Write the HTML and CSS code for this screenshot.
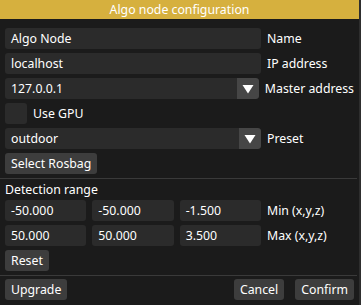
FILE: index.html
```html
<!DOCTYPE html>
<html>
<head>
<meta charset="utf-8">
<link rel="stylesheet" href="styles.css">
</head>
<body>
<div class="window">
  <div class="title">Algo node configuration</div>
  <div class="content">
    <div class="row">
      <div class="field">Algo Node</div>
      <span class="label">Name</span>
    </div>
    <div class="row">
      <div class="field">localhost</div>
      <span class="label">IP address</span>
    </div>
    <div class="row">
      <div class="field combo"><span class="combo-text">127.0.0.1</span><span class="arrow"><svg width="12" height="10" viewBox="0 0 12 10"><polygon points="0.5,1 11.5,1 6,9.5" fill="#fff"/></svg></span></div>
      <span class="label">Master address</span>
    </div>
    <div class="row">
      <div class="checkbox"></div>
      <span class="check-label">Use GPU</span>
    </div>
    <div class="row">
      <div class="field combo"><span class="combo-text">outdoor</span><span class="arrow"><svg width="12" height="10" viewBox="0 0 12 10"><polygon points="0.5,1 11.5,1 6,9.5" fill="#fff"/></svg></span></div>
      <span class="label">Preset</span>
    </div>
    <div class="row">
      <button class="btn">Select Rosbag</button>
    </div>
    <div class="sep"></div>
    <div class="text-line">Detection range</div>
    <div class="row">
      <div class="triple">
        <div class="field">-50.000</div>
        <div class="field">-50.000</div>
        <div class="field">-1.500</div>
      </div>
      <span class="label">Min (x,y,z)</span>
    </div>
    <div class="row">
      <div class="triple">
        <div class="field">50.000</div>
        <div class="field">50.000</div>
        <div class="field">3.500</div>
      </div>
      <span class="label">Max (x,y,z)</span>
    </div>
    <div class="row">
      <button class="btn">Reset</button>
    </div>
    <div class="sep"></div>
    <div class="row footer">
      <button class="btn">Upgrade</button>
      <div class="spacer"></div>
      <button class="btn">Cancel</button>
      <button class="btn">Confirm</button>
    </div>
  </div>
</div>
</body>
</html>
```
FILE: styles.css
```css
html, body {
  margin: 0;
  padding: 0;
  background: #1b1b1b;
}
.window {
  width: 361px;
  height: 305px;
  box-sizing: border-box;
  background: #1b1b1b;
  border-right: 2px solid #2e2e2e;
  font-family: "Noto Sans", "DejaVu Sans", sans-serif;
  font-size: 12.3px;
  color: #ffffff;
  overflow: hidden;
}
.title {
  height: 19px;
  line-height: 19px;
  background: #d6b03e;
  text-align: center;
  color: #ffffff;
}
.content {
  padding: 9px 5px 0 5px;
  display: flex;
  flex-direction: column;
}
.row {
  display: flex;
  align-items: center;
  gap: 6px;
  height: 21px;
  margin-bottom: 4px;
}
.field {
  box-sizing: border-box;
  width: 256px;
  height: 21px;
  line-height: 21px;
  padding: 0 6px;
  background: #2b2b2b;
  border-radius: 3px;
  white-space: nowrap;
  overflow: hidden;
}
.combo {
  display: flex;
  padding: 0 0 0 6px;
}
.combo-text {
  flex: 1;
}
.arrow {
  width: 22px;
  height: 21px;
  background: #464646;
  border-radius: 0 3px 3px 0;
  display: flex;
  align-items: center;
  justify-content: center;
}
.label {
  white-space: nowrap;
}
.checkbox {
  width: 22px;
  height: 21px;
  background: #2b2b2b;
  border-radius: 3px;
}
.btn {
  font: inherit;
  color: #ffffff;
  background: #3d3d3d;
  border: none;
  border-radius: 3px;
  height: 21px;
  line-height: 21px;
  padding: 0 6px;
  margin: 0;
}
.sep {
  height: 1px;
  background: #3a3a3a;
  margin: 0 -3px 3px -5px;
}
.text-line {
  height: 13px;
  line-height: 13px;
  margin: 1px 0 4px 0;
}
.triple {
  width: 256px;
  display: grid;
  grid-template-columns: 1fr 1fr 1fr;
  gap: 6px;
}
.triple .field {
  width: auto;
}
.footer {
  gap: 0;
}
.footer .spacer {
  flex: 1;
}
.footer .btn + .btn {
  margin-left: 11px;
}
```
